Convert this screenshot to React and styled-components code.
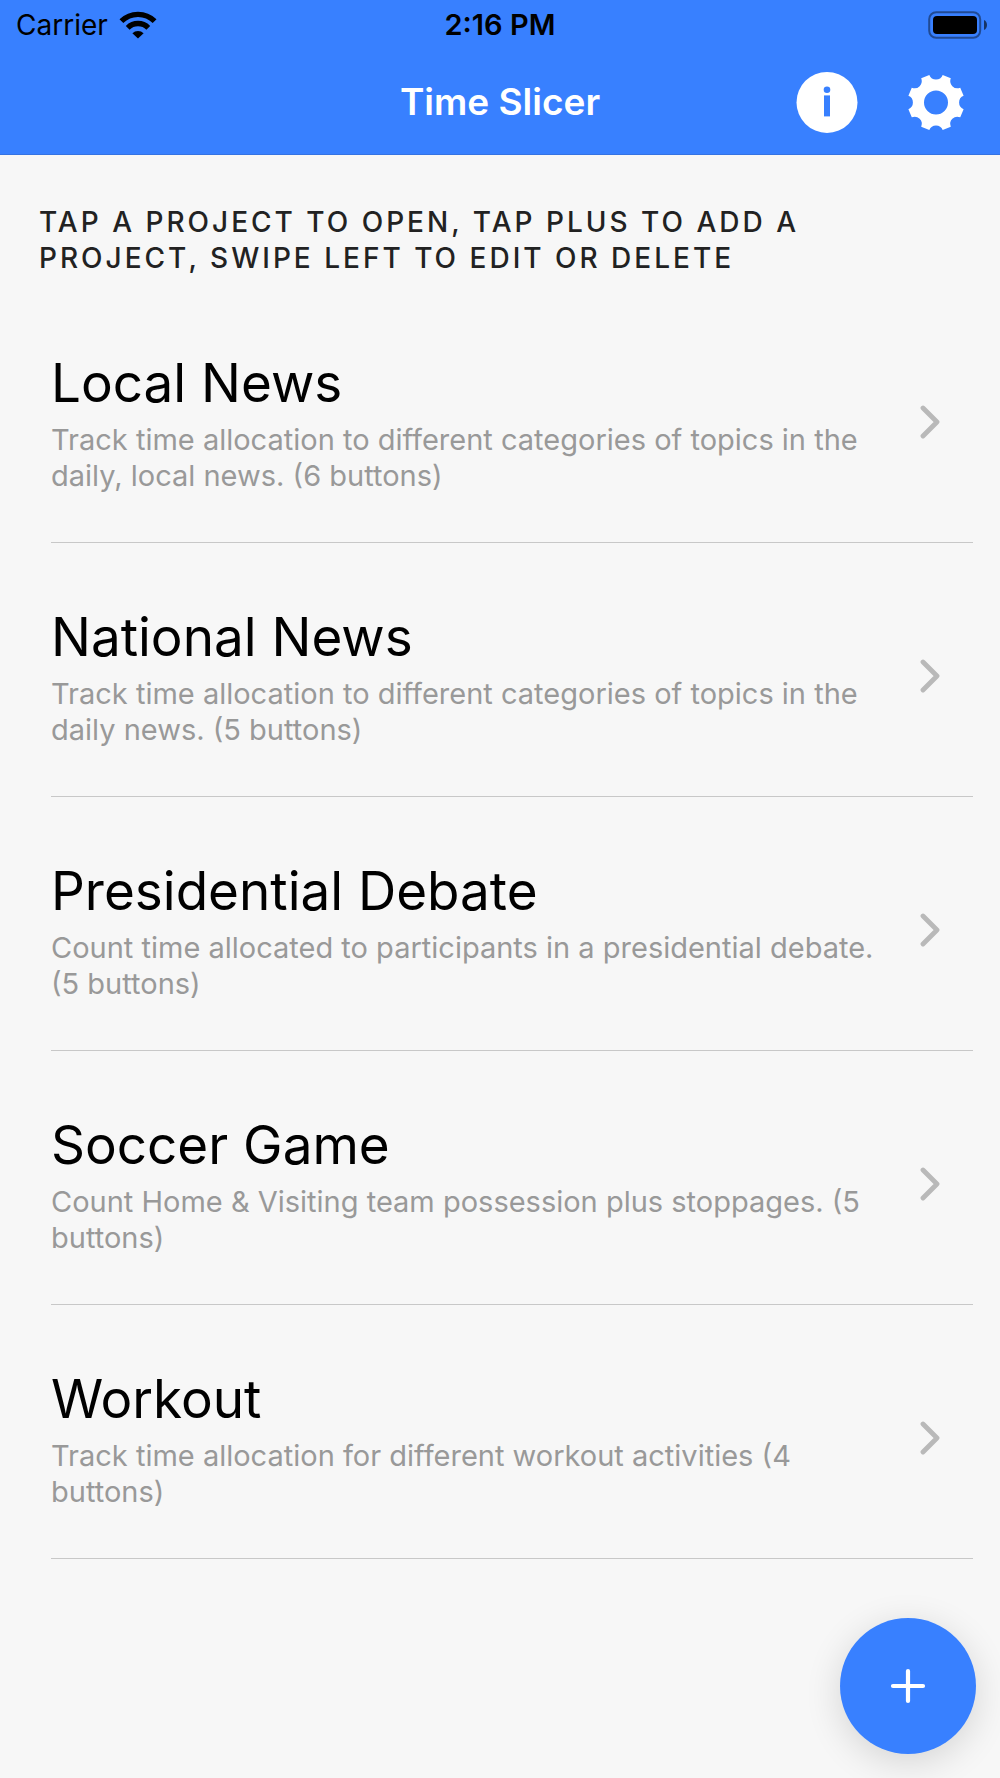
import styled, { createGlobalStyle } from 'styled-components';

const GlobalStyle = createGlobalStyle`
  * {
    box-sizing: border-box;
  }

  body {
    margin: 0;
    background: #f7f7f7;
    font-family: Inter, 'Liberation Sans', sans-serif;
  }
`;

const Page = styled.div`
  min-height: 100vh;
`;

const Header = styled.header`
  background: #3880ff;
  border-bottom: 1px solid #3573e2;
`;

const StatusBar = styled.div`
  display: grid;
  grid-template-columns: 1fr auto 1fr;
  align-items: center;
  height: 50px;
  padding: 0 12px;
  color: #000;
  font-size: 28px;
  line-height: 36px;
`;

const Carrier = styled.div`
  display: flex;
  align-items: center;
  gap: 11px;
  padding-left: 4px;
`;

const Clock = styled.time`
  font-size: 29px;
  font-weight: 600;
`;

const Battery = styled.div`
  display: flex;
  justify-content: flex-end;
`;

const Toolbar = styled.div`
  display: grid;
  grid-template-columns: 1fr auto 1fr;
  align-items: center;
  height: 104px;
  padding: 0 34px;
`;

const Title = styled.h1`
  grid-column: 2;
  margin: 0;
  color: #fff;
  font-size: 37px;
  font-weight: 600;
  line-height: 48px;
`;

const Actions = styled.div`
  display: flex;
  justify-content: flex-end;
  gap: 48px;
`;

const IconButton = styled.button`
  display: flex;
  align-items: center;
  justify-content: center;
  padding: 0;
  border: 0;
  background: none;
  color: #fff;
  cursor: pointer;
`;

const Hint = styled.h2`
  margin: 0;
  padding: 49px 39px 13px;
  color: #222;
  font-size: 28px;
  font-weight: 500;
  line-height: 36px;
  letter-spacing: 3px;
  text-transform: uppercase;
`;

const ProjectList = styled.ul`
  margin: 0;
  padding: 0 27px 0 51px;
  list-style: none;
`;

const ProjectLink = styled.a`
  display: flex;
  align-items: center;
  justify-content: space-between;
  padding: 60px 33px 48px 0;
  border-bottom: 1px solid #c8c8c8;
  color: #000;
  text-decoration: none;
`;

const ProjectText = styled.div`
  flex: 1;
  padding-right: 32px;
`;

const ProjectName = styled.h3`
  margin: 0 0 5px;
  font-size: 53px;
  font-weight: 400;
  line-height: 68px;
`;

const Description = styled.p`
  margin: 0;
  color: #999;
  font-size: 29px;
  line-height: 36px;
`;

const AddButton = styled.button`
  position: fixed;
  right: 24px;
  bottom: 24px;
  display: flex;
  align-items: center;
  justify-content: center;
  width: 136px;
  height: 136px;
  padding: 0;
  border: 0;
  border-radius: 50%;
  background: #3880ff;
  color: #fff;
  box-shadow: 0 8px 36px rgba(0, 0, 0, 0.14);
  cursor: pointer;
`;

const WifiIcon = () => (
  <svg width="38" height="28" viewBox="0 0 38 28" aria-hidden="true">
    <g fill="none" stroke="#000" strokeWidth="5.4">
      <path d="M2.4 10.2a23.6 23.6 0 0 1 33.2 0" />
      <path d="M8.7 16.8a14.6 14.6 0 0 1 20.6 0" />
    </g>
    <path d="M13.4 22.2a8 8 0 0 1 11.2 0L19 27.6z" />
  </svg>
);

const BatteryIcon = () => (
  <svg width="60" height="28" viewBox="0 0 60 28" aria-hidden="true">
    <rect x="1.2" y="1.2" width="51" height="25.6" rx="7" fill="none" stroke="#000" strokeOpacity="0.42" strokeWidth="2" />
    <rect x="5" y="5" width="44" height="18" rx="4" />
    <path d="M56 9c4 1.6 4 8.4 0 10z" fillOpacity="0.6" />
  </svg>
);

const InfoIcon = () => (
  <svg width="62" height="62" viewBox="0 0 62 62" aria-hidden="true">
    <circle cx="31" cy="31.4" r="30.5" fill="currentColor" />
    <circle cx="31" cy="18.8" r="3.3" fill="#3880ff" />
    <path d="M28 24.4h6v21h-6z" fill="#3880ff" />
  </svg>
);

// Eight teeth, with a round notch between each pair.
const gearPoint = (degrees) => {
  const angle = (degrees * Math.PI) / 180;
  return `${(30 + 28.4 * Math.sin(angle)).toFixed(2)} ${(30.5 - 28.4 * Math.cos(angle)).toFixed(2)}`;
};

const gearPath = `M${gearPoint(-13.6)}${Array.from({ length: 8 }, (_, i) => {
  const notch = i * 45;
  return `A7.2 7.2 0 0 0 ${gearPoint(notch + 13.6)}L${gearPoint(notch + 31.4)}`;
}).join('')}ZM42 30.5a12 12 0 1 0-24 0a12 12 0 1 0 24 0Z`;

const GearIcon = () => (
  <svg width="60" height="60" viewBox="0 0 60 60" aria-hidden="true">
    <path d={gearPath} fill="currentColor" fillRule="evenodd" />
  </svg>
);

const ChevronIcon = () => (
  <svg width="20" height="34" viewBox="0 0 20 34" aria-hidden="true">
    <path d="M3 3l14 14L3 31" fill="none" stroke="#b9b9b9" strokeWidth="4.8" strokeLinecap="round" strokeLinejoin="round" />
  </svg>
);

const PlusIcon = () => (
  <svg width="36" height="36" viewBox="0 0 36 36" aria-hidden="true">
    <path d="M18 3v30M3 18h30" fill="none" stroke="currentColor" strokeWidth="4.2" strokeLinecap="round" />
  </svg>
);

const projects = [
  {
    id: 'local-news',
    name: 'Local News',
    description: 'Track time allocation to different categories of topics in the daily, local news.',
    buttons: 6,
  },
  {
    id: 'national-news',
    name: 'National News',
    description: 'Track time allocation to different categories of topics in the daily news.',
    buttons: 5,
  },
  {
    id: 'presidential-debate',
    name: 'Presidential Debate',
    description: 'Count time allocated to participants in a presidential debate.',
    buttons: 5,
  },
  {
    id: 'soccer-game',
    name: 'Soccer Game',
    description: 'Count Home & Visiting team possession plus stoppages.',
    buttons: 5,
  },
  {
    id: 'workout',
    name: 'Workout',
    description: 'Track time allocation for different workout activities',
    buttons: 4,
  },
];

const ProjectItem = ({ project }) => (
  <li>
    <ProjectLink href={`#${project.id}`}>
      <ProjectText>
        <ProjectName>{project.name}</ProjectName>
        <Description>{`${project.description} (${project.buttons} buttons)`}</Description>
      </ProjectText>
      <ChevronIcon />
    </ProjectLink>
  </li>
);

const App = () => {
  return (
    <Page>
      <GlobalStyle />
      <Header>
        <StatusBar>
          <Carrier>
            Carrier
            <WifiIcon />
          </Carrier>
          <Clock>2:16 PM</Clock>
          <Battery>
            <BatteryIcon />
          </Battery>
        </StatusBar>
        <Toolbar>
          <Title>Time Slicer</Title>
          <Actions>
            <IconButton type="button" aria-label="About">
              <InfoIcon />
            </IconButton>
            <IconButton type="button" aria-label="Settings">
              <GearIcon />
            </IconButton>
          </Actions>
        </Toolbar>
      </Header>
      <main>
        <Hint>Tap a project to open, tap plus to add a project, swipe left to edit or delete</Hint>
        <ProjectList>
          {projects.map((project) => (
            <ProjectItem key={project.id} project={project} />
          ))}
        </ProjectList>
      </main>
      <AddButton type="button" aria-label="Add project">
        <PlusIcon />
      </AddButton>
    </Page>
  );
};

export default App;
